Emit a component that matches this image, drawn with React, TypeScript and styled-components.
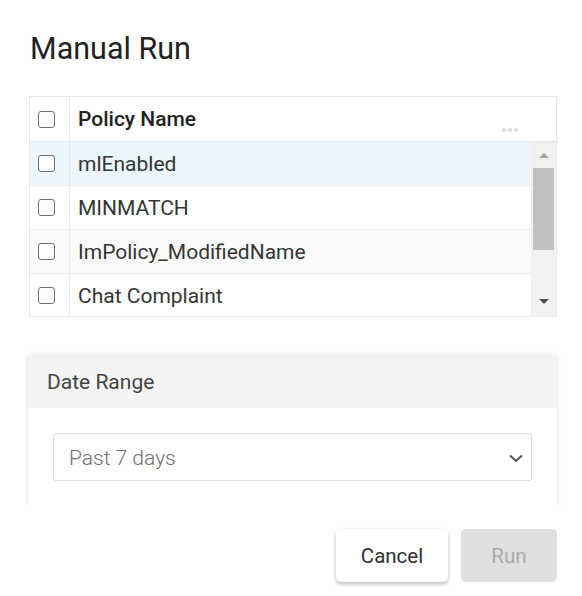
import React from "react";
import styled, { createGlobalStyle } from "styled-components";

const GlobalStyle = createGlobalStyle`
  body {
    margin: 0;
    background: #ffffff;
    font-family: Roboto, "Liberation Sans", sans-serif;
  }
`;

const Dialog = styled.div`
  width: 582px;
  height: 596px;
  box-sizing: border-box;
  display: flex;
  flex-direction: column;
`;

const Title = styled.h1`
  margin: 31px 0 0 30px;
  font-size: 30.5px;
  font-weight: 400;
  line-height: 35px;
  color: #222222;
`;

const Body = styled.div`
  height: 439px;
  overflow: hidden;
  box-sizing: border-box;
  padding: 30px 25px 0 28px;
  display: flex;
  flex-direction: column;
  gap: 37px;
`;

const Table = styled.div`
  margin-left: 1px;
  border: 1px solid #e8e8e8;
  display: flex;
  flex-direction: column;
`;

const HeaderRow = styled.div`
  height: 44px;
  display: flex;
  border-bottom: 1px solid #e8e8e8;
`;

const CheckCell = styled.div`
  width: 40px;
  flex: none;
  display: flex;
  align-items: center;
  padding-left: 8px;
  box-sizing: border-box;
  border-right: 1px solid #e8e8e8;
`;

const NameCell = styled.div<{ $head?: boolean }>`
  flex: 1;
  display: flex;
  align-items: center;
  padding-left: 8px;
  font-size: 21px;
  font-weight: ${(p) => (p.$head ? 500 : 400)};
  color: ${(p) => (p.$head ? "#222222" : "#353535")};
`;

const Dots = styled.div`
  align-self: flex-end;
  margin: 0 38px 9px auto;
  display: flex;
  gap: 2px;

  span {
    width: 4px;
    height: 4px;
    border-radius: 50%;
    background: #dcdcdc;
  }
`;

const Box = styled.span`
  width: 17px;
  height: 17px;
  box-sizing: border-box;
  border: 1.5px solid #6f6f6f;
  border-radius: 3px;
  background: #ffffff;
`;

const ScrollArea = styled.div`
  height: 174px;
  display: flex;
  overflow: hidden;
`;

const Rows = styled.div`
  flex: 1;
  display: flex;
  flex-direction: column;
`;

const Row = styled.div<{ $bg: string }>`
  height: 44px;
  flex: none;
  display: flex;
  box-sizing: border-box;
  border-bottom: 1px solid #ebebeb;
  background: ${(p) => p.$bg};
`;

const Scrollbar = styled.div`
  width: 25px;
  flex: none;
  background: #f1f1f1;
  display: flex;
  flex-direction: column;
  align-items: center;
`;

const Arrow = styled.div<{ $down?: boolean }>`
  width: 0;
  height: 0;
  border-left: 5px solid transparent;
  border-right: 5px solid transparent;
  ${(p) =>
    p.$down
      ? "border-top: 5px solid #505050; margin-top: auto; margin-bottom: 12px;"
      : "border-bottom: 5px solid #a3a3a3; margin-top: 11px;"}
`;

const Thumb = styled.div`
  width: 21px;
  height: 82px;
  margin-top: 10px;
  background: #c1c1c1;
`;

const Panel = styled.div`
  border-radius: 4px;
  box-shadow: 0 1px 4px rgba(0, 0, 0, 0.16);
  background: #ffffff;
  flex: none;
`;

const PanelHead = styled.div`
  height: 54px;
  display: flex;
  align-items: center;
  padding: 2px 0 0 19px;
  box-sizing: border-box;
  background: #f4f4f4;
  border-radius: 4px 4px 0 0;
  font-size: 21px;
  color: #444444;
`;

const PanelBody = styled.div`
  padding: 25px 25px 60px;
`;

const Select = styled.div`
  height: 48px;
  box-sizing: border-box;
  border: 1px solid #dcdcdc;
  border-radius: 3px;
  display: flex;
  align-items: center;
  justify-content: space-between;
  padding: 2px 7px 0 15px;
  font-size: 21px;
  font-weight: 300;
  color: #6e6e6e;
`;

const Footer = styled.div`
  display: flex;
  justify-content: flex-end;
  gap: 13px;
  padding: 24px 25px 0 0;
`;

const Button = styled.button<{ $disabled?: boolean }>`
  height: 53px;
  width: ${(p) => (p.$disabled ? "96px" : "112px")};
  border: none;
  border-radius: 5px;
  font-family: Roboto, "Liberation Sans", sans-serif;
  font-size: 20.5px;
  background: ${(p) => (p.$disabled ? "#e0e0e0" : "#ffffff")};
  color: ${(p) => (p.$disabled ? "#acacac" : "#2f2f2f")};
  box-shadow: ${(p) => (p.$disabled ? "none" : "0 2px 4px rgba(0, 0, 0, 0.28)")};
`;

const policies = [
  { name: "mlEnabled", bg: "#ecf6fd" },
  { name: "MINMATCH", bg: "#ffffff" },
  { name: "ImPolicy_ModifiedName", bg: "#fafafa" },
  { name: "Chat Complaint", bg: "#ffffff" },
];

const App: React.FC = () => {
  return (
    <Dialog>
      <GlobalStyle />
      <Title>Manual Run</Title>
      <Body>
        <Table>
          <HeaderRow>
            <CheckCell>
              <Box />
            </CheckCell>
            <NameCell $head>
              Policy Name
              <Dots>
                <span />
                <span />
                <span />
              </Dots>
            </NameCell>
          </HeaderRow>
          <ScrollArea>
            <Rows>
              {policies.map((p) => (
                <Row key={p.name} $bg={p.bg}>
                  <CheckCell>
                    <Box />
                  </CheckCell>
                  <NameCell>{p.name}</NameCell>
                </Row>
              ))}
            </Rows>
            <Scrollbar>
              <Arrow />
              <Thumb />
              <Arrow $down />
            </Scrollbar>
          </ScrollArea>
        </Table>
        <Panel>
          <PanelHead>Date Range</PanelHead>
          <PanelBody>
            <Select>
              Past 7 days
              <svg width="16" height="16" viewBox="0 0 16 16">
                <path d="M2 5.5 L8 11 L14 5.5" fill="none" stroke="#555" strokeWidth="2" />
              </svg>
            </Select>
          </PanelBody>
        </Panel>
      </Body>
      <Footer>
        <Button>Cancel</Button>
        <Button $disabled>Run</Button>
      </Footer>
    </Dialog>
  );
};

export default App;
